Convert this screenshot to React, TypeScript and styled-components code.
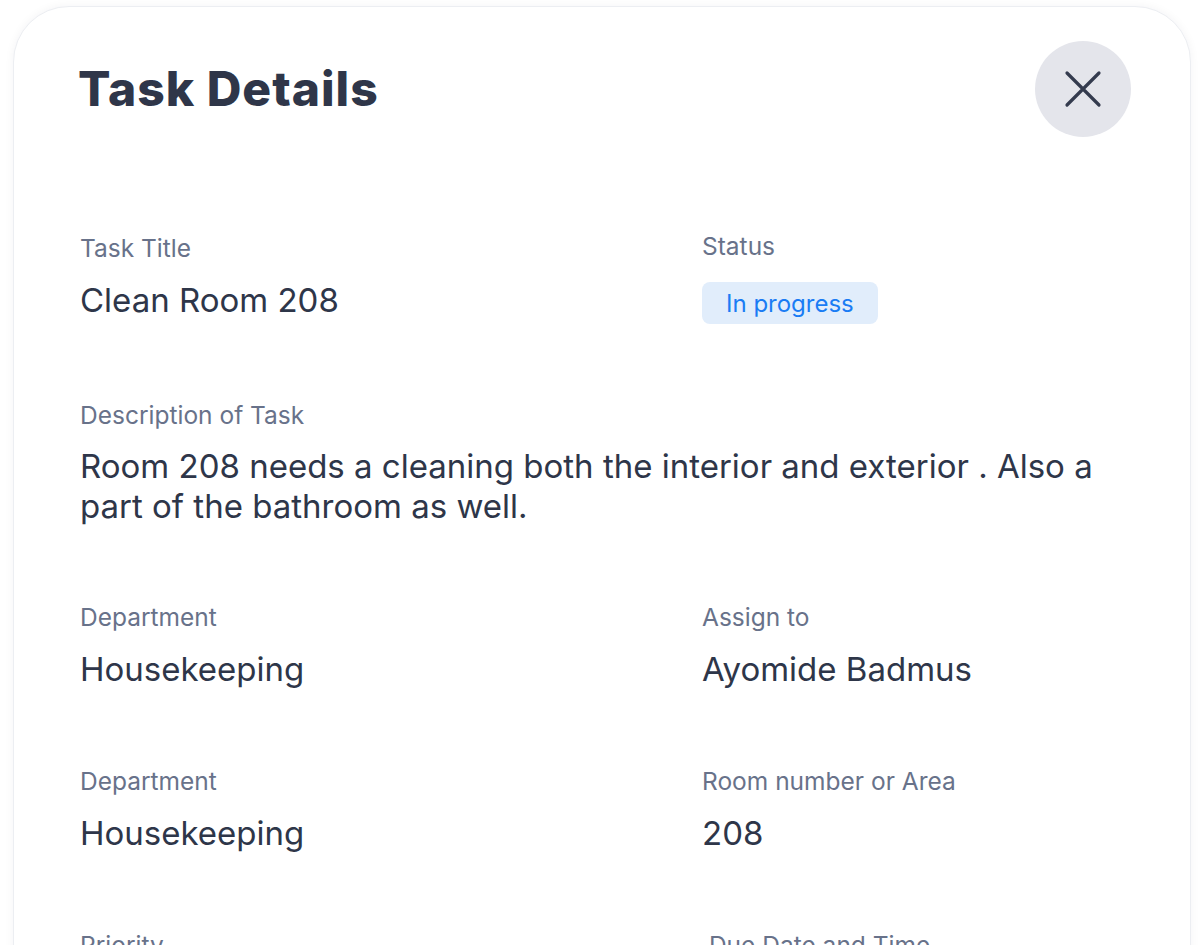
import styled, { createGlobalStyle } from "styled-components";

const GlobalStyle = createGlobalStyle`
  html, body {
    margin: 0;
    padding: 0;
    background: #ffffff;
    overflow: hidden;
  }
  body {
    font-family: Inter, "Noto Sans", "Liberation Sans", sans-serif;
    -webkit-font-smoothing: antialiased;
  }
`;

/* --- Styles --- */
const Page = styled.div`
  width: 1204px;
  height: 945px;
  padding: 6px 0 0 13px;
  box-sizing: border-box;
  overflow: hidden;
`;
const Card = styled.div`
  width: 1178px;
  min-height: 1200px;
  box-sizing: border-box;
  padding: 34px 66px 0 66px;
  background: #ffffff;
  border: 1.5px solid #eceef2;
  border-radius: 56px;
  box-shadow: 0 0 10px rgba(30, 40, 60, 0.05);
`;
const Header = styled.header`
  display: flex;
  align-items: center;
  justify-content: space-between;
  margin-right: -7px;
`;
const Title = styled.h1`
  margin: 0 0 0 -2px;
  font-size: 48px;
  line-height: 56px;
  font-weight: 800;
  letter-spacing: 1px;
  color: #2f3649;
`;
const CloseButton = styled.button`
  width: 96px;
  height: 96px;
  border-radius: 50%;
  border: none;
  background: #e4e5eb;
  display: flex;
  align-items: center;
  justify-content: center;
  padding: 0;
  cursor: pointer;
`;
const Grid = styled.div`
  display: grid;
  grid-template-columns: 622px 1fr;
  row-gap: 76px;
  margin-top: 96px;
`;
const Field = styled.div<{ $wide?: boolean }>`
  display: flex;
  flex-direction: column;
  gap: 16px;
  ${(p) => (p.$wide ? "grid-column: 1 / -1;" : "")}
`;
const Label = styled.span<{ $lift?: boolean }>`
  font-size: 24.5px;
  line-height: 30px;
  color: #68728a;
  ${(p) => (p.$lift ? "margin-top: -2px; margin-bottom: 2px;" : "")}
`;
const Value = styled.span`
  font-size: 33px;
  line-height: 42px;
  color: #2e3649;
`;
const Description = styled(Value)`
  line-height: 40px;
  padding-right: 20px;
`;
const Badge = styled.span`
  align-self: flex-start;
  height: 42px;
  padding: 0 24px;
  display: flex;
  align-items: center;
  background: #e1edfb;
  color: #1a7cf4;
  border-radius: 8px;
  font-size: 24px;
  margin-top: 3px;
`;

const fields = [
  { label: "Department", value: "Housekeeping" },
  { label: "Assign to", value: "Ayomide Badmus" },
  { label: "Department", value: "Housekeeping" },
  { label: "Room number or Area", value: "208" },
  { label: "Priority", value: "High" },
  { label: "\u00a0Due Date and Time", value: "12 Oct, 2024 10:00 AM" },
];

export default function App() {
  return (
    <>
      <GlobalStyle />
      <Page>
        <Card>
          <Header>
            <Title>Task Details</Title>
            <CloseButton aria-label="Close">
              <svg width="40" height="40" viewBox="0 0 40 40" fill="none">
                <path
                  d="M4 4L36 36M36 4L4 36"
                  stroke="#343b4e"
                  strokeWidth="3.2"
                  strokeLinecap="round"
                />
              </svg>
            </CloseButton>
          </Header>
          <Grid>
            <Field>
              <Label>Task Title</Label>
              <Value>Clean Room 208</Value>
            </Field>
            <Field>
              <Label $lift>Status</Label>
              <Badge>In progress</Badge>
            </Field>
            <Field $wide>
              <Label>Description of Task</Label>
              <Description>
                Room 208 needs a cleaning both the interior and exterior . Also
                a part of the bathroom as well.
              </Description>
            </Field>
            {fields.map((f, i) => (
              <Field key={i}>
                <Label>{f.label}</Label>
                <Value>{f.value}</Value>
              </Field>
            ))}
          </Grid>
        </Card>
      </Page>
    </>
  );
}
